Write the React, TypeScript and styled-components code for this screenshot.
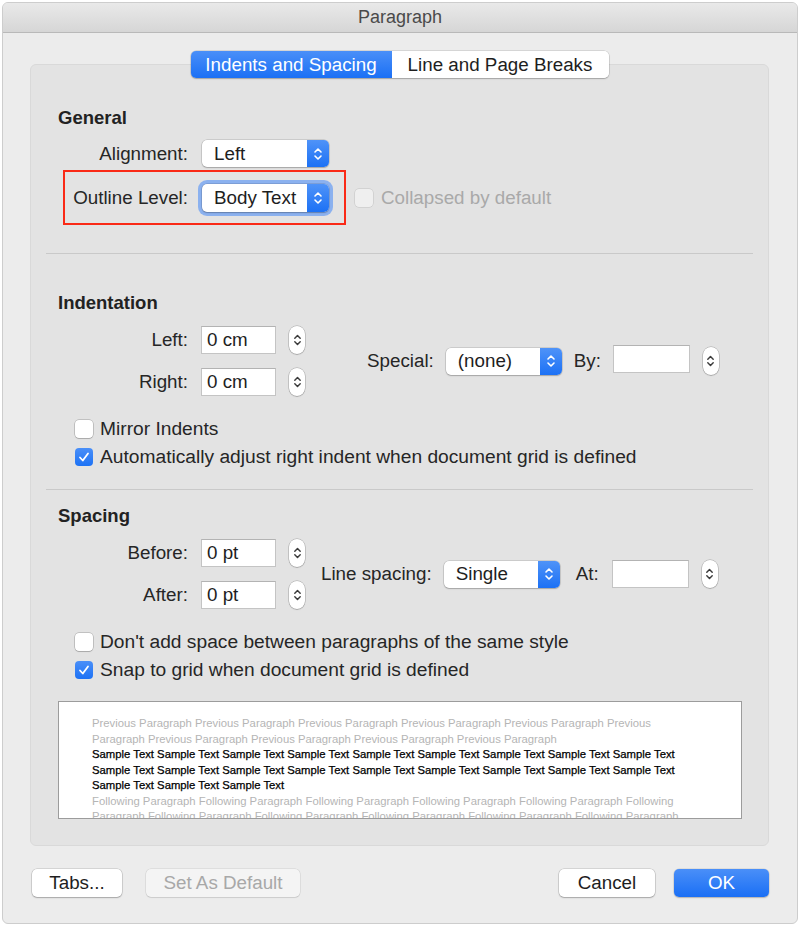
import React from "react";
import styled, { createGlobalStyle, css } from "styled-components";

const Global = createGlobalStyle`
  html, body { margin: 0; padding: 0; background: #ffffff; }
  body { font-family: "Liberation Sans", Arial, sans-serif; color: #262626; }
  * { box-sizing: border-box; }
`;

const FS = "18.8px";

const Window = styled.div`
  margin: 2px;
  width: 796px;
  height: 922px;
  border: 1px solid #cdcdcd;
  border-radius: 6px;
  background: #ececec;
  overflow: hidden;
  display: flex;
  flex-direction: column;
`;

const TitleBar = styled.div`
  height: 30px;
  flex: none;
  display: flex;
  align-items: center;
  justify-content: center;
  background: linear-gradient(#e9e9e9, #d6d6d6);
  border-bottom: 1px solid #b9b9b9;
  font-size: 18px;
  color: #4a4a4a;
`;

const Body = styled.div`
  display: flex;
  flex-direction: column;
  padding: 18px 28px 0 27px;
`;

const TabsRow = styled.div`
  display: flex;
  justify-content: center;
  position: relative;
  z-index: 1;
`;

const Segmented = styled.div`
  display: flex;
  height: 27px;
  border-radius: 5px;
  box-shadow: 0 0 0 0.5px rgba(0, 0, 0, 0.18), 0 1px 1.5px rgba(0, 0, 0, 0.22);
  overflow: hidden;
`;

const Segment = styled.div<{ $active?: boolean; $w: number }>`
  width: ${(p) => p.$w}px;
  display: flex;
  align-items: center;
  justify-content: center;
  font-size: ${FS};
  ${(p) =>
    p.$active
      ? css`
          background: linear-gradient(#4a8ff8, #1b70f5);
          color: #fff;
        `
      : css`
          background: #fff;
          color: #1e1e1e;
        `}
`;

const Panel = styled.div`
  margin-top: -14px;
  background: #e3e3e3;
  border: 1px solid #d9d9d9;
  border-radius: 6px;
  padding: 42px 15px 26px 15px;
  display: flex;
  flex-direction: column;
`;

const Section = styled.div`
  padding: 0 11px 0 12px;
  display: flex;
  flex-direction: column;
`;

const Heading = styled.div<{ $mt?: number }>`
  font-size: 18.5px;
  font-weight: 700;
  line-height: 22px;
  color: #222;
  margin-top: ${(p) => p.$mt ?? 0}px;
`;

const Separator = styled.div<{ $mt: number }>`
  height: 1px;
  background: #c9c9c9;
  margin-top: ${(p) => p.$mt}px;
`;

const FormRow = styled.div<{ $mt?: number }>`
  display: grid;
  grid-template-columns: 130px auto auto auto;
  column-gap: 14px;
  align-items: center;
  justify-content: start;
  margin-top: ${(p) => p.$mt ?? 0}px;
  position: relative;
`;

const Label = styled.span<{ $disabled?: boolean }>`
  font-size: ${FS};
  line-height: 22px;
  color: ${(p) => (p.$disabled ? "#a9a9a9" : "#262626")};
  white-space: nowrap;
`;

const RightLabel = styled(Label)`
  text-align: right;
`;

const CheckLabel = styled(Label)`
  font-size: 19.2px;
`;

const PopupBox = styled.div<{ $w: number; $h?: number; $focus?: boolean }>`
  width: ${(p) => p.$w}px;
  height: ${(p) => p.$h ?? 27}px;
  display: flex;
  border-radius: 5px;
  background: #fff;
  box-shadow: 0 0 0 0.5px rgba(0, 0, 0, 0.2), 0 1px 1.5px rgba(0, 0, 0, 0.2)
    ${(p) => (p.$focus ? ", 0 0 0 4px rgba(92, 150, 246, 0.65)" : "")};
  overflow: hidden;
`;

const PopupText = styled.div`
  flex: 1;
  display: flex;
  align-items: center;
  padding-left: 12px;
  font-size: ${FS};
  color: #1e1e1e;
`;

const PopupArrow = styled.div`
  width: 22px;
  display: flex;
  align-items: center;
  justify-content: center;
  background: linear-gradient(#4f93f8, #1c71f5);
`;

const Chevrons = ({ color, w = 10, h = 16 }: { color: string; w?: number; h?: number }) => (
  <svg width={w} height={h} viewBox="0 0 10 16" fill="none">
    <path d="M2 6 L5 3 L8 6" stroke={color} strokeWidth="1.6" strokeLinecap="round" strokeLinejoin="round" />
    <path d="M2 10 L5 13 L8 10" stroke={color} strokeWidth="1.6" strokeLinecap="round" strokeLinejoin="round" />
  </svg>
);

const Popup = ({ value, w, focus, h }: { value: string; w: number; focus?: boolean; h?: number }) => (
  <PopupBox $w={w} $focus={focus} $h={h}>
    <PopupText>{value}</PopupText>
    <PopupArrow>
      <Chevrons color="#fff" />
    </PopupArrow>
  </PopupBox>
);

const Input = styled.div<{ $w: number }>`
  width: ${(p) => p.$w}px;
  height: 28px;
  background: #fff;
  border: 1px solid #c4c4c4;
  border-top-color: #b3b3b3;
  display: flex;
  align-items: center;
  padding-left: 5px;
  font-size: ${FS};
  color: #1e1e1e;
`;

const StepperBox = styled.div`
  width: 16px;
  height: 28px;
  border-radius: 8px;
  background: #fff;
  box-shadow: 0 0 0 0.5px rgba(0, 0, 0, 0.28), 0 1px 1px rgba(0, 0, 0, 0.15);
  display: flex;
  align-items: center;
  justify-content: center;
`;

const Stepper = () => (
  <StepperBox>
    <Chevrons color="#3a3a3a" w={9} h={18} />
  </StepperBox>
);

const CheckRow = styled.div<{ $mt?: number; $pl?: number }>`
  display: flex;
  align-items: center;
  gap: 7px;
  margin-top: ${(p) => p.$mt ?? 0}px;
  padding-left: ${(p) => p.$pl ?? 17}px;
`;

const Box = styled.div<{ $checked?: boolean; $disabled?: boolean }>`
  width: 18px;
  height: 18px;
  flex: none;
  border-radius: 4px;
  display: flex;
  align-items: center;
  justify-content: center;
  ${(p) =>
    p.$checked
      ? css`
          background: linear-gradient(#4a8ff8, #1d72f5);
        `
      : p.$disabled
      ? css`
          background: #efefef;
          box-shadow: 0 0 0 0.5px rgba(0, 0, 0, 0.15);
        `
      : css`
          background: #fff;
          box-shadow: 0 0 0 0.5px rgba(0, 0, 0, 0.3), 0 1px 1px rgba(0, 0, 0, 0.12);
        `}
`;

const Checkbox = ({ checked, disabled }: { checked?: boolean; disabled?: boolean }) => (
  <Box $checked={checked} $disabled={disabled}>
    {checked && (
      <svg width="12" height="12" viewBox="0 0 12 12" fill="none">
        <path d="M2 6.5 L4.8 9.5 L10 2.5" stroke="#fff" strokeWidth="1.8" strokeLinecap="round" strokeLinejoin="round" />
      </svg>
    )}
  </Box>
);

const SplitRow = styled.div<{ $mt: number }>`
  display: flex;
  align-items: center;
  margin-top: ${(p) => p.$mt}px;
`;

const StackGrid = styled.div`
  display: grid;
  grid-template-columns: 130px auto auto;
  column-gap: 13px;
  row-gap: 14px;
  align-items: center;
`;

const Inline = styled.div<{ $ml: number }>`
  display: flex;
  align-items: center;
  margin-left: ${(p) => p.$ml}px;
`;

const Gap = styled.div<{ $w: number }>`
  width: ${(p) => p.$w}px;
  flex: none;
`;

const RedBox = styled.div`
  position: absolute;
  left: 5px;
  top: -14px;
  width: 283px;
  height: 55px;
  border: 2.5px solid #fa2a17;
  pointer-events: none;
`;

const Preview = styled.div`
  margin-top: 20px;
  height: 118px;
  background: #fff;
  border: 1px solid #9c9c9c;
  padding: 14px 0 0 33px;
  overflow: hidden;
  font-family: "Liberation Sans", Arial, sans-serif;
  font-size: 11.3px;
  line-height: 15.5px;
`;

const PreviewLine = styled.div<{ $dark?: boolean }>`
  white-space: nowrap;
  color: ${(p) => (p.$dark ? "#000" : "#b5b5b5")};
  ${(p) =>
    p.$dark &&
    css`
      -webkit-text-stroke: 0.25px #000;
    `}
`;

const Footer = styled.div`
  display: flex;
  align-items: center;
  padding: 23px 0 0 2px;
  gap: 24px;
`;

const Spacer = styled.div`
  flex: 1;
`;

const Button = styled.div<{ $w: number; $primary?: boolean; $disabled?: boolean }>`
  width: ${(p) => p.$w}px;
  height: 28px;
  border-radius: 5px;
  display: flex;
  align-items: center;
  justify-content: center;
  font-size: ${FS};
  ${(p) =>
    p.$primary
      ? css`
          background: linear-gradient(#4a8ff8, #1a6ff5);
          color: #fff;
          box-shadow: 0 0 0 0.5px rgba(0, 0, 0, 0.12), 0 1px 1.5px rgba(0, 0, 0, 0.2);
        `
      : p.$disabled
      ? css`
          background: #f4f4f4;
          color: #a8a8a8;
          box-shadow: 0 0 0 0.5px rgba(0, 0, 0, 0.12), 0 1px 1px rgba(0, 0, 0, 0.08);
        `
      : css`
          background: #fff;
          color: #1e1e1e;
          box-shadow: 0 0 0 0.5px rgba(0, 0, 0, 0.2), 0 1px 1.5px rgba(0, 0, 0, 0.22);
        `}
`;

const prevA = "Previous Paragraph Previous Paragraph Previous Paragraph Previous Paragraph Previous Paragraph Previous";
const prevB = "Paragraph Previous Paragraph Previous Paragraph Previous Paragraph Previous Paragraph";
const sampleFull = Array(9).fill("Sample Text").join(" ");
const sampleEnd = Array(3).fill("Sample Text").join(" ");
const follA = "Following Paragraph Following Paragraph Following Paragraph Following Paragraph Following Paragraph Following";
const follB = "Paragraph Following Paragraph Following Paragraph Following Paragraph Following Paragraph Following Paragraph";

export default function App() {
  return (
    <>
      <Global />
      <Window>
        <TitleBar>Paragraph</TitleBar>
        <Body>
          <TabsRow>
            <Segmented>
              <Segment $active $w={201}>Indents and Spacing</Segment>
              <Segment $w={217}>Line and Page Breaks</Segment>
            </Segmented>
          </TabsRow>
          <Panel>
            <Section>
              <Heading>General</Heading>
              <FormRow $mt={11}>
                <RightLabel>Alignment:</RightLabel>
                <Popup value="Left" w={127} />
              </FormRow>
              <FormRow $mt={17}>
                <RightLabel>Outline Level:</RightLabel>
                <Popup value="Body Text" w={127} h={28} focus />
                <CheckRow $pl={0} style={{ marginLeft: 12, gap: 8 }}>
                  <Checkbox disabled />
                  <Label $disabled>Collapsed by default</Label>
                </CheckRow>
                <RedBox />
              </FormRow>
            </Section>
            <Separator $mt={41} />
            <Section>
              <Heading $mt={38}>Indentation</Heading>
              <SplitRow $mt={12}>
                <StackGrid>
                  <RightLabel>Left:</RightLabel>
                  <Input $w={75}>0 cm</Input>
                  <Stepper />
                  <RightLabel>Right:</RightLabel>
                  <Input $w={75}>0 cm</Input>
                  <Stepper />
                </StackGrid>
                <Inline $ml={62}>
                  <Label>Special:</Label>
                  <Gap $w={12} />
                  <Popup value="(none)" w={116} />
                  <Gap $w={12} />
                  <Label>By:</Label>
                  <Gap $w={12} />
                  <Input $w={77} style={{ marginTop: -4 }} />
                  <Gap $w={13} />
                  <Stepper />
                </Inline>
              </SplitRow>
              <CheckRow $mt={22}>
                <Checkbox />
                <CheckLabel>Mirror Indents</CheckLabel>
              </CheckRow>
              <CheckRow $mt={6}>
                <Checkbox checked />
                <CheckLabel>Automatically adjust right indent when document grid is defined</CheckLabel>
              </CheckRow>
            </Section>
            <Separator $mt={21} />
            <Section>
              <Heading $mt={15}>Spacing</Heading>
              <SplitRow $mt={12}>
                <StackGrid>
                  <RightLabel>Before:</RightLabel>
                  <Input $w={75}>0 pt</Input>
                  <Stepper />
                  <RightLabel>After:</RightLabel>
                  <Input $w={75}>0 pt</Input>
                  <Stepper />
                </StackGrid>
                <Inline $ml={16}>
                  <Label>Line spacing:</Label>
                  <Gap $w={12} />
                  <Popup value="Single" w={116} />
                  <Gap $w={16} />
                  <Label>At:</Label>
                  <Gap $w={13} />
                  <Input $w={77} />
                  <Gap $w={13} />
                  <Stepper />
                </Inline>
              </SplitRow>
              <CheckRow $mt={22}>
                <Checkbox />
                <CheckLabel>Don't add space between paragraphs of the same style</CheckLabel>
              </CheckRow>
              <CheckRow $mt={6}>
                <Checkbox checked />
                <CheckLabel>Snap to grid when document grid is defined</CheckLabel>
              </CheckRow>
              <Preview>
                <PreviewLine>{prevA}</PreviewLine>
                <PreviewLine>{prevB}</PreviewLine>
                <PreviewLine $dark>{sampleFull}</PreviewLine>
                <PreviewLine $dark>{sampleFull}</PreviewLine>
                <PreviewLine $dark>{sampleEnd}</PreviewLine>
                <PreviewLine>{follA}</PreviewLine>
                <PreviewLine>{follB}</PreviewLine>
              </Preview>
            </Section>
          </Panel>
          <Footer>
            <Button $w={90}>Tabs...</Button>
            <Button $w={154} $disabled>Set As Default</Button>
            <Spacer />
            <Button $w={96}>Cancel</Button>
            <Button $w={95} $primary style={{ marginLeft: -5 }}>OK</Button>
          </Footer>
        </Body>
      </Window>
    </>
  );
}
